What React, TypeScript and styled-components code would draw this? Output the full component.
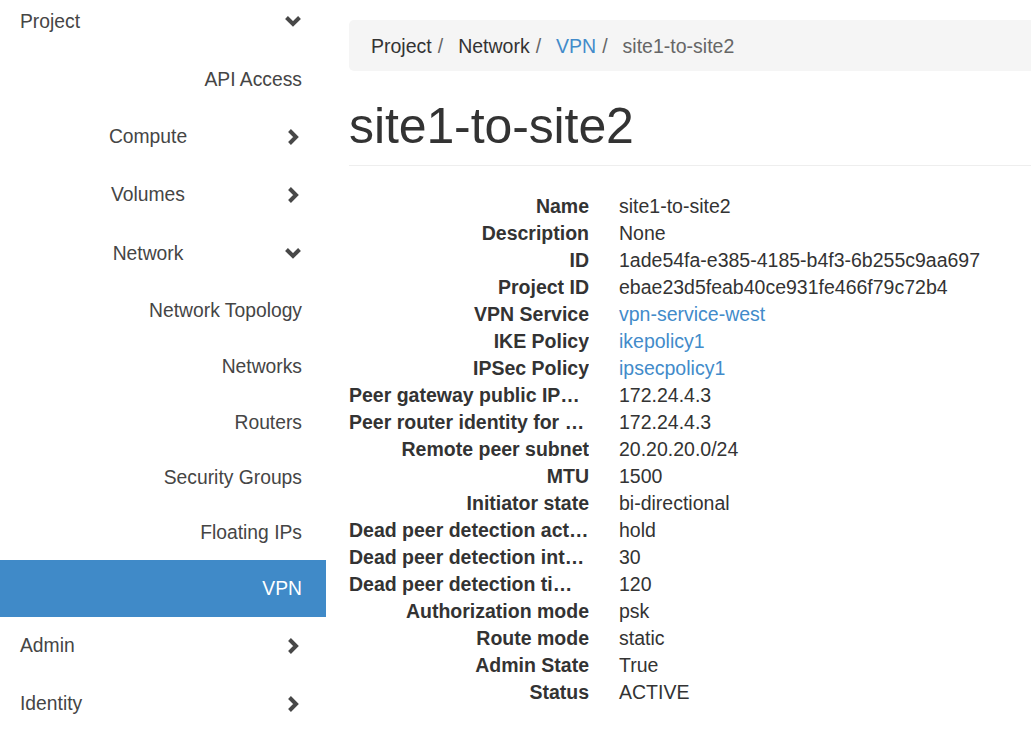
import React from "react";
import styled, { createGlobalStyle } from "styled-components";

const Global = createGlobalStyle`
  html, body { margin: 0; padding: 0; background: #fff; overflow: hidden; }
  body { font-family: "Liberation Sans", Arial, sans-serif; color: #333; }
`;

const Page = styled.div`
  display: flex;
  width: 1031px;
  height: 754px;
  overflow: hidden;
`;

const Sidebar = styled.nav`
  width: 326px;
  flex: none;
  margin-top: -8px;
  display: flex;
  flex-direction: column;
`;

type Kind = "top" | "group" | "leaf";

const NavRow = styled.div<{ $kind: Kind; $h: number; $active?: boolean }>`
  height: ${(p) => p.$h}px;
  flex: none;
  display: grid;
  grid-template-columns: 1fr 18px;
  align-items: center;
  padding: 0 24px 0 ${(p) => (p.$kind === "top" ? 20 : p.$kind === "group" ? 12 : 0)}px;
  font-size: 19.3px;
  color: ${(p) => (p.$active ? "#fff" : "#454545")};
  background: ${(p) => (p.$active ? "#408ac8" : "transparent")};
`;

const NavLabel = styled.span<{ $kind: Kind }>`
  text-align: ${(p) => (p.$kind === "top" ? "left" : p.$kind === "group" ? "center" : "right")};
  grid-column: ${(p) => (p.$kind === "leaf" ? "1 / 3" : "1")};
  white-space: nowrap;
  padding-top: 1px;
`;

const Chevron = styled.svg`
  display: block;
  justify-self: center;
`;

const Down = () => (
  <Chevron width="18" height="12" viewBox="0 0 18 12">
    <polyline points="2.5,2.5 9,9 15.5,2.5" fill="none" stroke="#484848" strokeWidth="4" />
  </Chevron>
);
const Right = () => (
  <Chevron width="12" height="18" viewBox="0 0 12 18">
    <polyline points="2.5,2.5 9,9 2.5,15.5" fill="none" stroke="#484848" strokeWidth="4" />
  </Chevron>
);

const Main = styled.main`
  flex: none;
  width: 700px;
  padding: 20px 0 0 23px;
`;

const Breadcrumb = styled.ol`
  list-style: none;
  margin: 0;
  height: 51px;
  box-sizing: border-box;
  padding: 2px 0 0 22px;
  display: flex;
  align-items: center;
  background: #f5f5f5;
  border-radius: 5px 0 0 5px;
  font-size: 19.5px;
  white-space: pre;
`;

const Crumb = styled.li<{ $tone: "dark" | "link" | "muted" }>`
  color: ${(p) => (p.$tone === "link" ? "#428bca" : p.$tone === "muted" ? "#666" : "#333")};
`;

const Sep = styled.span`
  color: #666;
  padding: 0 15px 0 6px;
`;

const Title = styled.h1`
  margin: 28px 0 0;
  padding-bottom: 11px;
  border-bottom: 1px solid #eee;
  font-size: 50px;
  font-weight: normal;
  line-height: 1.1;
  color: #333;
  letter-spacing: -0.1px;
`;

const Details = styled.dl`
  margin: 26.5px 0 0;
  display: grid;
  grid-template-columns: 240px 1fr;
  column-gap: 30px;
  font-size: 19.5px;
  line-height: 27px;
`;

const Term = styled.dt`
  font-weight: bold;
  text-align: right;
  white-space: nowrap;
  overflow: hidden;
  text-overflow: ellipsis;
  color: #333;
`;

const Value = styled.dd<{ $link?: boolean }>`
  margin: 0;
  white-space: nowrap;
  color: ${(p) => (p.$link ? "#428bca" : "#333")};
`;

const nav: { label: string; kind: Kind; h: number; icon?: "down" | "right"; active?: boolean }[] = [
  { label: "Project", kind: "top", h: 58, icon: "down" },
  { label: "API Access", kind: "leaf", h: 58 },
  { label: "Compute", kind: "group", h: 57.5, icon: "right" },
  { label: "Volumes", kind: "group", h: 58, icon: "right" },
  { label: "Network", kind: "group", h: 59, icon: "down" },
  { label: "Network Topology", kind: "leaf", h: 56 },
  { label: "Networks", kind: "leaf", h: 56 },
  { label: "Routers", kind: "leaf", h: 55 },
  { label: "Security Groups", kind: "leaf", h: 55.5 },
  { label: "Floating IPs", kind: "leaf", h: 55 },
  { label: "VPN", kind: "leaf", h: 57, active: true },
  { label: "Admin", kind: "top", h: 57, icon: "right" },
  { label: "Identity", kind: "top", h: 59, icon: "right" },
];

const rows: [string, string, boolean?][] = [
  ["Name", "site1-to-site2"],
  ["Description", "None"],
  ["ID", "1ade54fa-e385-4185-b4f3-6b255c9aa697"],
  ["Project ID", "ebae23d5feab40ce931fe466f79c72b4"],
  ["VPN Service", "vpn-service-west", true],
  ["IKE Policy", "ikepolicy1", true],
  ["IPSec Policy", "ipsecpolicy1", true],
  ["Peer gateway public IPv4/IPv6 Address or FQDN", "172.24.4.3"],
  ["Peer router identity for authentication (Peer ID)", "172.24.4.3"],
  ["Remote peer subnet", "20.20.20.0/24"],
  ["MTU", "1500"],
  ["Initiator state", "bi-directional"],
  ["Dead peer detection action", "hold"],
  ["Dead peer detection interval", "30"],
  ["Dead peer detection timeout", "120"],
  ["Authorization mode", "psk"],
  ["Route mode", "static"],
  ["Admin State", "True"],
  ["Status", "ACTIVE"],
];

export default function App() {
  return (
    <>
      <Global />
      <Page>
        <Sidebar>
          {nav.map((n) => (
            <NavRow key={n.label} $kind={n.kind} $h={n.h} $active={n.active}>
              <NavLabel $kind={n.kind}>{n.label}</NavLabel>
              {n.icon === "down" && <Down />}
              {n.icon === "right" && <Right />}
            </NavRow>
          ))}
        </Sidebar>
        <Main>
          <Breadcrumb>
            <Crumb $tone="dark">Project</Crumb>
            <Sep>/</Sep>
            <Crumb $tone="dark">Network</Crumb>
            <Sep>/</Sep>
            <Crumb $tone="link">VPN</Crumb>
            <Sep>/</Sep>
            <Crumb $tone="muted">site1-to-site2</Crumb>
          </Breadcrumb>
          <Title>site1-to-site2</Title>
          <Details>
            {rows.map(([k, v, link]) => (
              <React.Fragment key={k}>
                <Term>{k}</Term>
                <Value $link={link}>{v}</Value>
              </React.Fragment>
            ))}
          </Details>
        </Main>
      </Page>
    </>
  );
}
